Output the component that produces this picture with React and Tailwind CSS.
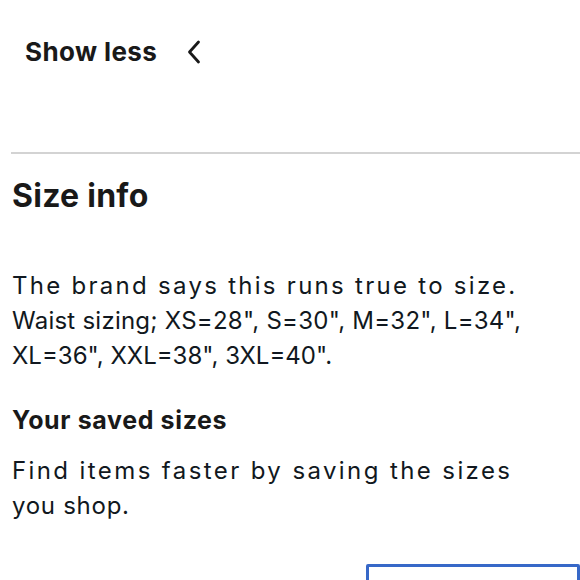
export default function App() {
  return (
    <div className="w-[580px] h-[580px] overflow-hidden bg-white text-[#191919]" style={{ fontFamily: 'Inter, "Noto Sans", sans-serif' }}>
      <div className="pl-[25px] pt-[34px] h-[152px]">
        <button className="flex items-center gap-[30px] text-[26px] font-bold tracking-[0.015em] leading-[36px]">
          Show less
          <svg width="14" height="24" viewBox="0 0 14 24" fill="none" stroke="#191919" strokeWidth="2.8" strokeLinecap="round" strokeLinejoin="round">
            <path d="M11.5 2 L2.5 12 L11.5 22" />
          </svg>
        </button>
      </div>
      <div className="ml-[11px] border-t-2 border-[#d3d3d3]" />
      <div className="pl-[12px]">
        <h2 className="mt-[22px] text-[32px] font-bold tracking-[0.008em] leading-[40px]">Size info</h2>
        <p className="mt-[52px] text-[24px] leading-[35px] text-[#111820] font-normal whitespace-nowrap">
          <span className="block tracking-[0.095em]">The brand says this runs true to size.</span>
          <span className="block tracking-[0.01em]">Waist sizing; XS=28", S=30", M=32", L=34",</span>
          <span className="block">XL=36", XXL=38", 3XL=40".</span>
        </p>
        <h3 className="mt-[30px] text-[25px] font-bold tracking-[0.025em] leading-[34px]">Your saved sizes</h3>
        <p className="mt-[16px] text-[24px] leading-[35px] text-[#111820] whitespace-nowrap">
          <span className="block tracking-[0.1em]">Find items faster by saving the sizes</span>
          <span className="block tracking-[0.03em]">you shop.</span>
        </p>
        <div className="mt-[41px] ml-[354px] h-[40px] border-[3px] border-[#3768c8] rounded-t-[2px]" />
      </div>
    </div>
  )
}
